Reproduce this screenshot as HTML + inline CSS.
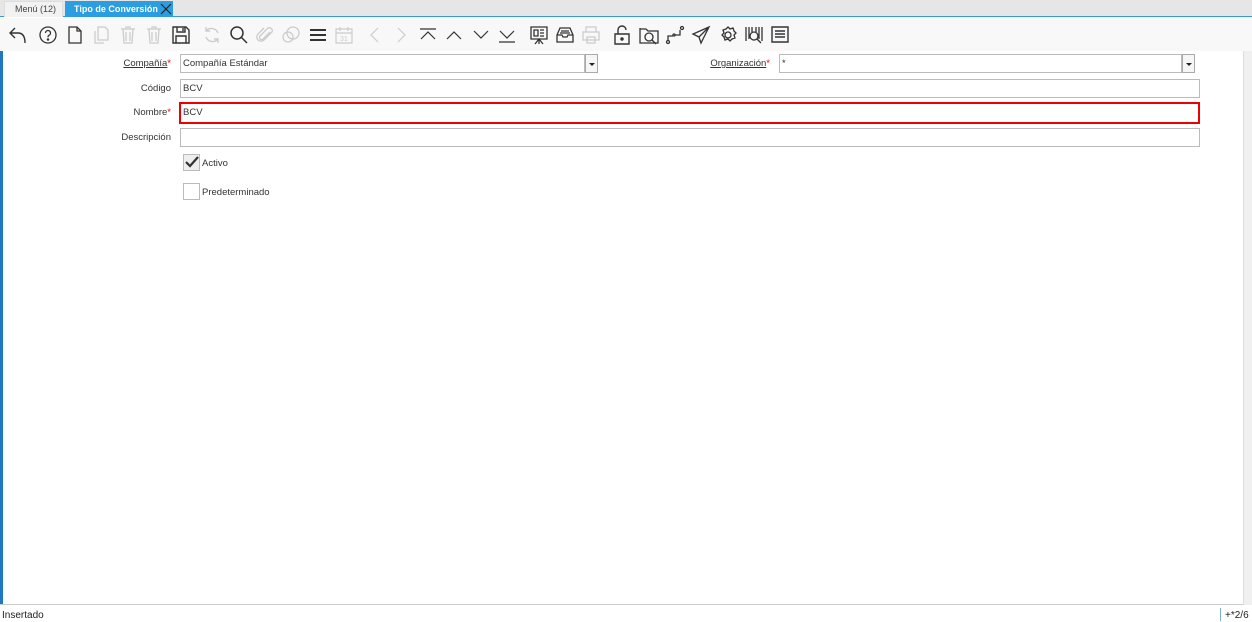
<!DOCTYPE html>
<html><head><meta charset="utf-8"><style>
*{box-sizing:border-box;margin:0;padding:0}
body{width:1252px;height:622px;background:#fff;font-family:"Liberation Sans",sans-serif;font-size:10px;color:#333;position:relative;overflow:hidden}
.tabbar{position:absolute;left:0;top:0;width:1252px;height:17px;background:#e6e6e6;border-bottom:1px solid #3a9ad9}
.tab{position:absolute;top:1px;height:16px;line-height:16px;font-size:9px;white-space:nowrap}
.t1{left:4px;width:59px;background:#f2f2f2;color:#444;border:1px solid #ddd;border-bottom:none;padding-left:10px;line-height:15px}
.t2{left:65px;width:108px;background:#2a9ee0;color:#fff;font-weight:bold;padding-left:9px}
.toolbar{position:absolute;left:0;top:18px;width:1252px;height:33px;background:#f8f8f8}
.ic{position:absolute;top:7px;width:20px;height:20px}
.left{position:absolute;left:0;top:51px;width:3px;height:554px;background:#1f78c1}
.rgt{position:absolute;left:1243px;top:51px;width:9px;height:554px;background:#f0f0f0;border-left:1px solid #ddd}
.bottomline{position:absolute;left:0;top:604px;width:1243px;height:1px;background:#ccc}
.status{position:absolute;top:610px;font-size:10px;color:#222}
.lbl{position:absolute;text-align:right;font-size:9.5px;color:#333;white-space:nowrap}
.lbl u{text-decoration:underline}
.req{color:#e00}
.inp{position:absolute;height:19px;border:1px solid #bbb;background:#fff;font-size:9.5px;line-height:17px;padding-left:2px}
.dd{position:absolute;width:13px;height:19px;border:1px solid #aaa;background:#f6f6f6}
.dd:after{content:"";position:absolute;left:3px;top:8px;border-left:3px solid transparent;border-right:3px solid transparent;border-top:3px solid #222}
.cb{position:absolute;width:17px;height:17px;border:1px solid #bbb;background:#fff}
</style></head><body>
<div class="tabbar">
<div class="tab t1">Menú (12)</div>
<div class="tab t2">Tipo de Conversión<svg style="position:absolute;right:1px;top:2px" width="12" height="12" viewBox="0 0 12 12"><path d="M1 1L11 11M11 1L1 11" stroke="#222" stroke-width="1.2"/></svg></div>
</div>
<div class="toolbar">
<svg class="ic" style="left:8px" viewBox="0 0 20 20" fill="none" stroke="#333" stroke-width="1.4"><path d="M7 3L2 8l5 5M2 8h8c5 0 7 4 7 10"/></svg>
<svg class="ic" style="left:38px" viewBox="0 0 20 20" fill="none" stroke="#333" stroke-width="1.3"><circle cx="10" cy="10" r="8"/><path d="M7.5 8a2.5 2.5 0 1 1 3.5 2.3c-1 .5-1 1-1 2"/><circle cx="10" cy="14.5" r=".6" fill="#333"/></svg>
<svg class="ic" style="left:65px" viewBox="0 0 20 20" fill="none" stroke="#333" stroke-width="1.3"><path d="M4 2h8l4 4v12H4zM12 2v4h4"/></svg>
<svg class="ic" style="left:91px" viewBox="0 0 20 20" fill="none" stroke="#ccc" stroke-width="1.3"><path d="M7 2h7l3 3v10H7zM4 6v12h9"/></svg>
<svg class="ic" style="left:118px" viewBox="0 0 20 20" fill="none" stroke="#ccc" stroke-width="1.3"><path d="M3 4h14M8 4V2h4v2M5 4l1 14h8l1-14M8 7v9M12 7v9"/></svg>
<svg class="ic" style="left:144px" viewBox="0 0 20 20" fill="none" stroke="#ccc" stroke-width="1.3"><path d="M3 4h14M8 4V2h4v2M5 4l1 14h8l1-14M8 7v9M12 7v9"/></svg>
<svg class="ic" style="left:171px" viewBox="0 0 20 20" fill="none" stroke="#333" stroke-width="1.4"><path d="M2 2h13l3 3v13H2zM6 2v5h8V2M5 11h10v7H5zM12 3v3"/></svg>
<svg class="ic" style="left:202px" viewBox="0 0 20 20" fill="none" stroke="#ccc" stroke-width="1.4"><path d="M16 8A7 7 0 0 0 4 6M4 12a7 7 0 0 0 12 2M4 2v4h4M16 18v-4h-4"/></svg>
<svg class="ic" style="left:229px" viewBox="0 0 20 20" fill="none" stroke="#333" stroke-width="1.5"><circle cx="8" cy="8" r="6"/><path d="M12.5 12.5L18 18"/></svg>
<svg class="ic" style="left:255px" viewBox="0 0 20 20" fill="none" stroke="#ccc" stroke-width="1.3"><path d="M15 7l-7 7a2 2 0 0 1-3-3l8-8a3 3 0 0 1 4 4l-8 8a4 4 0 0 1-6-6l6-6"/></svg>
<svg class="ic" style="left:281px" viewBox="0 0 20 20" fill="none" stroke="#ccc" stroke-width="1.3"><circle cx="12" cy="8" r="6"/><circle cx="7" cy="12" r="5"/></svg>
<svg class="ic" style="left:308px" viewBox="0 0 20 20" fill="none" stroke="#333" stroke-width="2"><path d="M2 5h16M2 10h16M2 15h16"/></svg>
<svg class="ic" style="left:334px" viewBox="0 0 20 20" fill="none" stroke="#ccc" stroke-width="1.2"><path d="M2 4h16v14H2zM2 8h16M6 2v4M14 2v4"/><text x="6" y="16" font-size="7" fill="#ccc" stroke="none">31</text></svg>
<svg class="ic" style="left:365px" viewBox="0 0 20 20" fill="none" stroke="#ccc" stroke-width="1.2"><path d="M13 3L6 10l7 7"/></svg>
<svg class="ic" style="left:391px" viewBox="0 0 20 20" fill="none" stroke="#ccc" stroke-width="1.2"><path d="M7 3l7 7-7 7"/></svg>
<svg class="ic" style="left:418px" viewBox="0 0 20 20" fill="none" stroke="#333" stroke-width="1.2"><path d="M2 4h16M3 14l7-7 7 7"/></svg>
<svg class="ic" style="left:444px" viewBox="0 0 20 20" fill="none" stroke="#333" stroke-width="1.2"><path d="M3 14l7-7 7 7"/></svg>
<svg class="ic" style="left:471px" viewBox="0 0 20 20" fill="none" stroke="#333" stroke-width="1.2"><path d="M3 6l7 7 7-7"/></svg>
<svg class="ic" style="left:497px" viewBox="0 0 20 20" fill="none" stroke="#333" stroke-width="1.2"><path d="M3 6l7 7 7-7M2 17h16"/></svg>
<svg class="ic" style="left:529px" viewBox="0 0 20 20" fill="none" stroke="#333" stroke-width="1.3"><path d="M2 2h16v12H2zM10 14v5M6 19l4-5 4 5M5 5h4v6H5zM11 5h4M11 8h4M11 11h4"/></svg>
<svg class="ic" style="left:555px" viewBox="0 0 20 20" fill="none" stroke="#333" stroke-width="1.3"><path d="M2 10l3-7h10l3 7v7H2zM2 10h5l1 2h4l1-2h5M6 6h8M5 8h10"/></svg>
<svg class="ic" style="left:581px" viewBox="0 0 20 20" fill="none" stroke="#ccc" stroke-width="1.3"><path d="M5 7V2h10v5M2 7h16v8H2zM6 12h8v6H6z"/></svg>
<svg class="ic" style="left:612px" viewBox="0 0 20 20" fill="none" stroke="#333" stroke-width="1.4"><path d="M6 9V5a4 4 0 0 1 8 0M3 9h14v10H3z"/><circle cx="10" cy="14" r="1" fill="#333"/></svg>
<svg class="ic" style="left:639px" viewBox="0 0 20 20" fill="none" stroke="#333" stroke-width="1.3"><path d="M1 4h6l2 2h10v12H1zM1 4v-1"/><circle cx="10" cy="12" r="4"/><path d="M13 15l4 4"/></svg>
<svg class="ic" style="left:665px" viewBox="0 0 20 20" fill="none" stroke="#333" stroke-width="1.3"><circle cx="3" cy="17" r="1.5"/><circle cx="17" cy="3" r="1.5"/><circle cx="9" cy="10" r="1"/><path d="M3 15v-4h5M10 10h5V5"/></svg>
<svg class="ic" style="left:691px" viewBox="0 0 20 20" fill="none" stroke="#333" stroke-width="1.3"><path d="M18 2L2 9l6 3 2 6zM18 2L8 12"/></svg>
<svg class="ic" style="left:718px" viewBox="0 0 20 20" fill="none" stroke="#333" stroke-width="1.3"><circle cx="10" cy="10" r="3"/><path d="M10 2l2 2 3-1 1 3 2 2-2 2 1 3-3 1-2 2-2-2-3 1-1-3-2-2 2-2-1-3 3-1z"/></svg>
<svg class="ic" style="left:744px" viewBox="0 0 20 20" fill="none" stroke="#333" stroke-width="1.3"><path d="M2 2v14M5 2v12M8 2v5M12 2v5M15 2v12M18 2v14"/><circle cx="10" cy="11" r="4"/><path d="M13 14l4 4"/></svg>
<svg class="ic" style="left:770px" viewBox="0 0 20 20" fill="none" stroke="#333" stroke-width="1.4"><path d="M2 2h16v15H2zM5 6h10M5 9h10M5 12h10"/></svg>
</div>
<div class="left"></div><div class="rgt"></div><div class="bottomline"></div>
<div class="lbl" style="left:100px;width:71px;top:58px"><u>Compañía</u><span class="req">*</span></div>
<div class="inp" style="left:180px;top:54px;width:405px">Compañía Estándar</div>
<div class="dd" style="left:585px;top:54px"></div>
<div class="lbl" style="left:690px;width:80px;top:58px"><u>Organización</u><span class="req">*</span></div>
<div class="inp" style="left:779px;top:54px;width:403px">*</div>
<div class="dd" style="left:1182px;top:54px"></div>
<div class="lbl" style="left:100px;width:71px;top:83px">Código</div>
<div class="inp" style="left:180px;top:79px;width:1020px">BCV</div>
<div class="lbl" style="left:100px;width:71px;top:107px">Nombre<span class="req">*</span></div>
<div class="inp" style="left:179px;top:102px;width:1021px;height:22px;border:2px solid #e00;line-height:17px">BCV</div>
<div class="lbl" style="left:100px;width:71px;top:132px">Descripción</div>
<div class="inp" style="left:180px;top:128px;width:1020px"></div>
<div class="cb" style="left:183px;top:154px;background:#eee"><svg width="17" height="17" viewBox="0 0 17 17" style="position:absolute;left:-1px;top:-1px"><path d="M3 8l4 4 8-9" fill="none" stroke="#333" stroke-width="2.2"/></svg></div>
<div style="position:absolute;left:202px;top:158px;font-size:9.5px">Activo</div>
<div class="cb" style="left:183px;top:183px"></div>
<div style="position:absolute;left:202px;top:187px;font-size:9.5px">Predeterminado</div>
<div class="status" style="left:2px">Insertado</div>
<div style="position:absolute;left:1220px;top:608px;width:1px;height:13px;background:#7aaee0"></div>
<div class="status" style="left:1225px">+*2/6</div>
</body></html>
